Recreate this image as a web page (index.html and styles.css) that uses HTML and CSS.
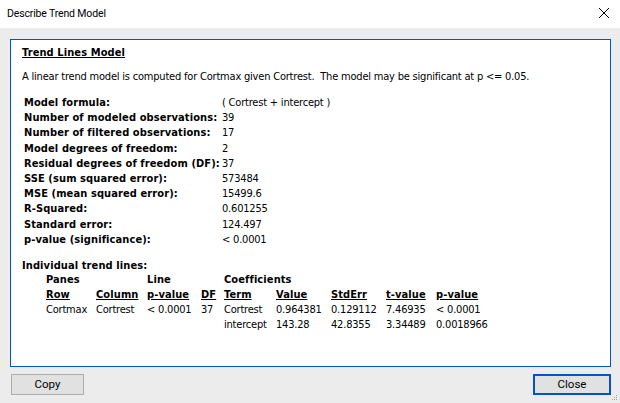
FILE: index.html
```html
<!DOCTYPE html>
<html>
<head>
<meta charset="utf-8">
<link rel="stylesheet" href="styles.css">
</head>
<body>
<div class="window">
  <div class="titlebar">
    <span class="title">Describe Trend Model</span>
    <svg class="close-x" width="12" height="12" viewBox="0 0 12 12"><path d="M1 1 L11 11 M11 1 L1 11" stroke="#000" stroke-width="1" fill="none"/></svg>
  </div>
  <div class="body">
    <div class="panel">
      <div class="heading">Trend Lines Model</div>
      <p class="summary">A linear trend model is computed for Cortmax given Cortrest.&nbsp; The model may be significant at p &lt;= 0.05.</p>
      <div class="stats">
        <div class="lbl">Model formula:</div><div class="val">( Cortrest + intercept )</div>
        <div class="lbl">Number of modeled observations:</div><div class="val">39</div>
        <div class="lbl">Number of filtered observations:</div><div class="val">17</div>
        <div class="lbl">Model degrees of freedom:</div><div class="val">2</div>
        <div class="lbl">Residual degrees of freedom (DF):</div><div class="val">37</div>
        <div class="lbl">SSE (sum squared error):</div><div class="val">573484</div>
        <div class="lbl">MSE (mean squared error):</div><div class="val">15499.6</div>
        <div class="lbl">R-Squared:</div><div class="val">0.601255</div>
        <div class="lbl">Standard error:</div><div class="val">124.497</div>
        <div class="lbl">p-value (significance):</div><div class="val">&lt; 0.0001</div>
      </div>
      <div class="subhead">Individual trend lines:</div>
      <table class="lines">
        <colgroup>
          <col class="c1"><col class="c2"><col class="c3"><col class="c4"><col class="c5"><col class="c6"><col class="c7"><col class="c8"><col class="c9">
        </colgroup>
        <tr class="group">
          <th>Panes</th><th></th><th>Line</th><th></th><th colspan="5">Coefficients</th>
        </tr>
        <tr class="cols">
          <th><u>Row</u></th><th><u>Column</u></th><th><u>p-value</u></th><th><u>DF</u></th><th><u>Term</u></th><th><u>Value</u></th><th><u>StdErr</u></th><th><u>t-value</u></th><th><u>p-value</u></th>
        </tr>
        <tr>
          <td>Cortmax</td><td>Cortrest</td><td>&lt; 0.0001</td><td>37</td><td>Cortrest</td><td>0.964381</td><td>0.129112</td><td>7.46935</td><td>&lt; 0.0001</td>
        </tr>
        <tr>
          <td></td><td></td><td></td><td></td><td>intercept</td><td>143.28</td><td>42.8355</td><td>3.34489</td><td>0.0018966</td>
        </tr>
      </table>
    </div>
    <div class="buttons">
      <button class="btn">Copy</button>
      <button class="btn default">Close</button>
    </div>
    <svg class="grip" width="6" height="6" viewBox="0 0 6 6">
      <rect x="4" y="0" width="1" height="1" fill="#a0a0a0"/>
      <rect x="2" y="2" width="1" height="1" fill="#a0a0a0"/>
      <rect x="4" y="2" width="1" height="1" fill="#a0a0a0"/>
      <rect x="0" y="4" width="1" height="1" fill="#a0a0a0"/>
      <rect x="2" y="4" width="1" height="1" fill="#a0a0a0"/>
      <rect x="4" y="4" width="1" height="1" fill="#a0a0a0"/>
    </svg>
  </div>
</div>
</body>
</html>
```

FILE: styles.css
```css
html, body {
  margin: 0;
  padding: 0;
  background: #ececec;
}
.window {
  width: 620px;
  height: 403px;
  display: flex;
  flex-direction: column;
  overflow: hidden;
}
.titlebar {
  height: 28px;
  background: #fff;
  display: flex;
  align-items: center;
  justify-content: space-between;
  padding: 0 10px 0 7px;
  box-sizing: border-box;
  flex: none;
}
.title {
  font-family: Roboto, "Noto Sans", sans-serif;
  font-size: 10.5px;
  letter-spacing: -0.15px;
  color: #000;
  position: relative;
  top: -1px;
}
.close-x {
  display: block;
  margin-top: -2px;
}
.body {
  flex: 1;
  position: relative;
  background: #ececec;
  padding: 11px 9px 0 10px;
  display: flex;
  flex-direction: column;
}
.panel {
  height: 328px;
  box-sizing: border-box;
  border: 1px solid #0055cc;
  background: #fff;
  padding: 5px 11px 0 11px;
  font-family: "DejaVu Sans Condensed", "DejaVu Sans", sans-serif;
  font-stretch: condensed;
  font-size: 11px;
  letter-spacing: -0.2px;
  line-height: 15px;
  color: #000;
}
.heading {
  font-weight: bold;
  text-decoration: underline;
  letter-spacing: 0.1px;
}
.summary {
  margin: 9px 0 11px 0;
}
.stats {
  display: grid;
  grid-template-columns: 198px auto;
  padding-left: 2px;
  line-height: 15.2px;
}
.lbl {
  font-weight: bold;
  letter-spacing: 0.1px;
  white-space: nowrap;
}
.subhead {
  font-weight: bold;
  letter-spacing: 0.1px;
  margin-top: 11px;
}
.lines {
  border-collapse: collapse;
  margin-left: 24px;
  margin-top: -1px;
  table-layout: fixed;
  font-size: 11px;
}
.lines th, .lines td {
  padding: 0;
  text-align: left;
  white-space: nowrap;
  line-height: 15px;
}
.lines th {
  font-weight: bold;
  letter-spacing: 0.1px;
}
.c1 { width: 50px; }
.c2 { width: 51px; }
.c3 { width: 54px; }
.c4 { width: 23px; }
.c5 { width: 52px; }
.c6 { width: 55px; }
.c7 { width: 55px; }
.c8 { width: 50px; }
.c9 { width: 60px; }
.buttons {
  display: flex;
  justify-content: space-between;
  margin-top: 7px;
  padding-left: 1px;
}
.btn {
  font-family: Roboto, "Noto Sans", sans-serif;
  font-size: 11.5px;
  height: 21px;
  box-sizing: border-box;
  background: #e1e1e1;
  border: 1px solid #adadad;
  padding: 0;
  color: #000;
  width: 73px;
  line-height: 17px;
}
.btn.default {
  width: 78px;
  border: 2px solid #0055cc;
}
.grip {
  position: absolute;
  right: 2px;
  bottom: 2px;
}
```
